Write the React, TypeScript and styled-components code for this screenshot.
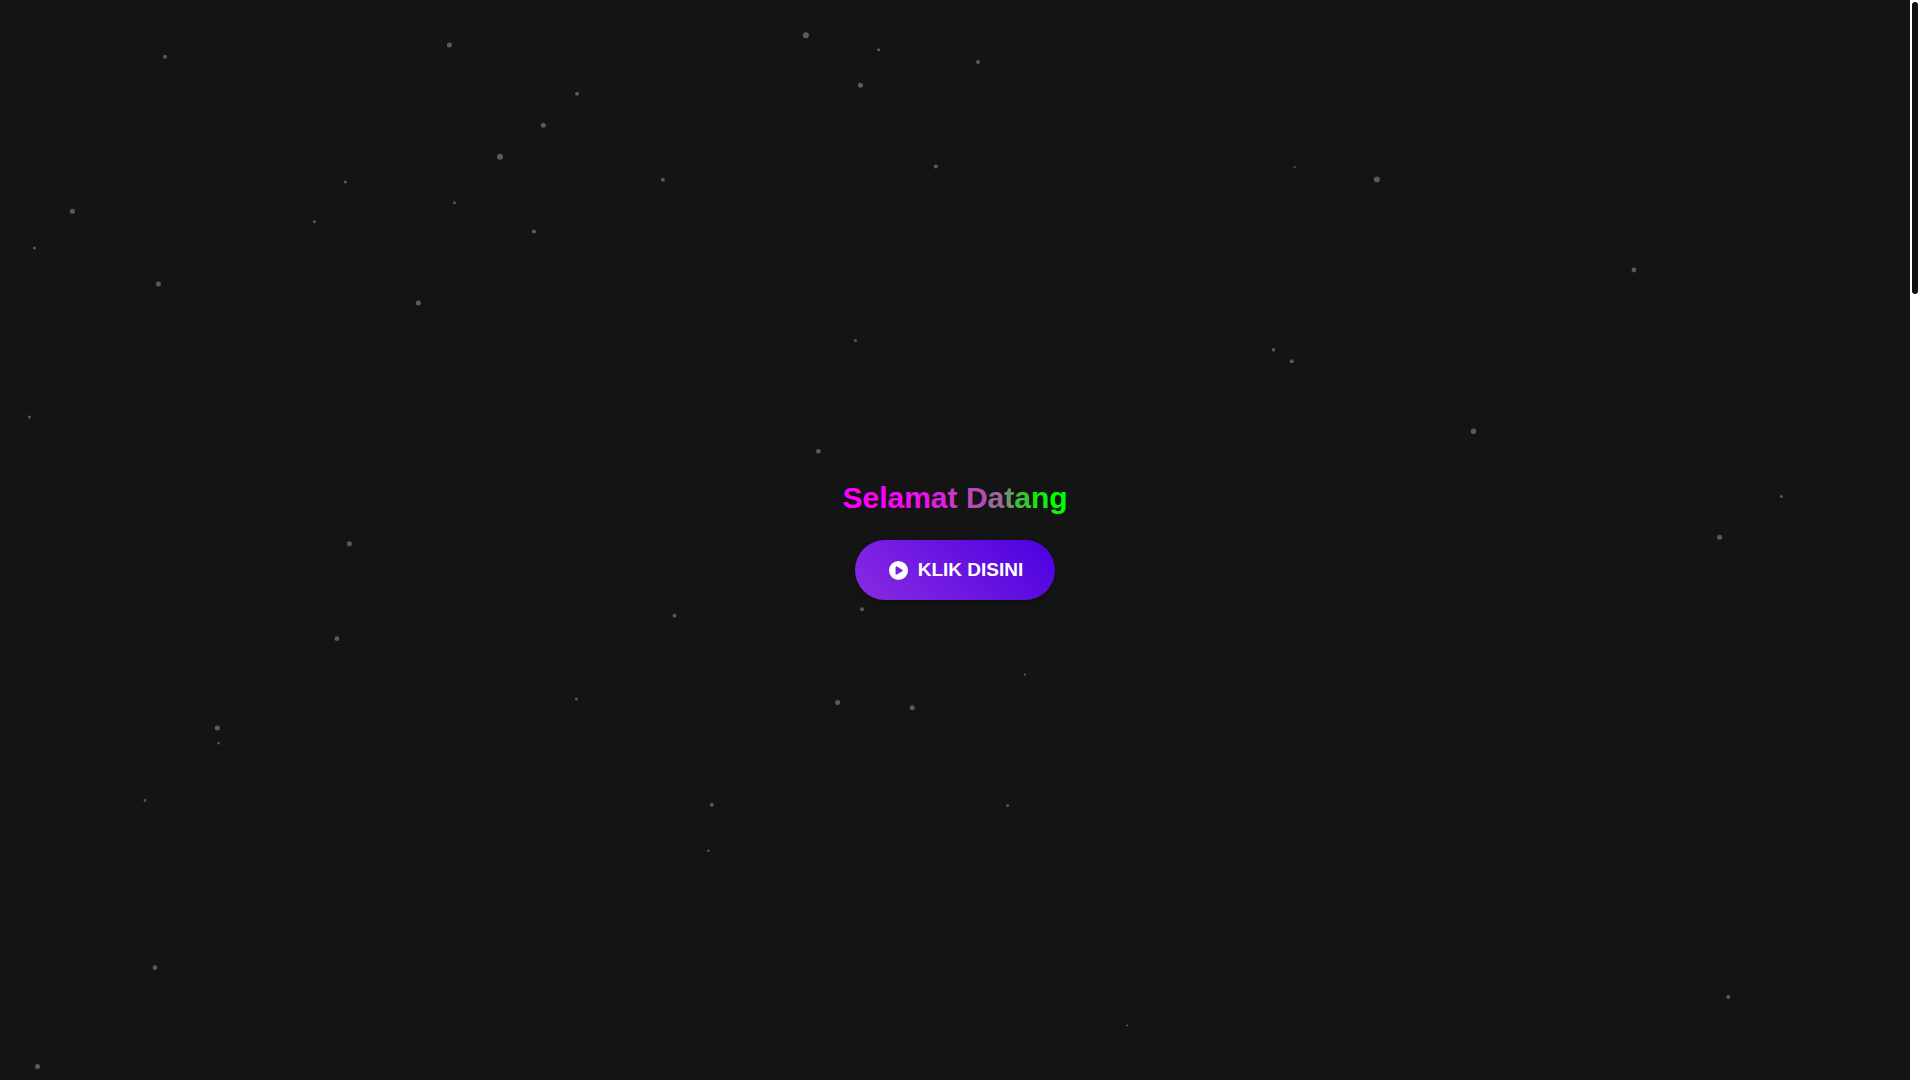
import React from "react";
import styled, { createGlobalStyle } from "styled-components";

const GlobalStyle = createGlobalStyle`
  *, *::before, *::after { box-sizing: border-box; }
  body {
    margin: 0;
    background: #141414;
    font-family: "Liberation Sans", Arial, sans-serif;
  }
`;

const Page = styled.div`
  display: flex;
  min-height: 100vh;
`;

const Hero = styled.main`
  position: relative;
  flex: 1;
  display: flex;
  flex-direction: column;
  align-items: center;
  justify-content: center;
  gap: 24px;
  overflow: hidden;
`;

const StarField = styled.svg`
  position: absolute;
  inset: 0;
  width: 100%;
  height: 100%;
  fill: #ffffff;
  fill-opacity: 0.3;
`;

const Title = styled.h1`
  position: relative;
  margin: 0;
  font-size: 30px;
  line-height: 36px;
  font-weight: 700;
`;

const Letter = styled.span<{ $color: string }>`
  color: ${({ $color }) => $color};
`;

const StartButton = styled.button`
  position: relative;
  display: inline-flex;
  align-items: center;
  gap: 10px;
  height: 60px;
  padding: 0 32px 0 34px;
  border: 0;
  border-radius: 30px;
  background: linear-gradient(45deg, #8a2be2, #4b00e0);
  box-shadow: 0 4px 6px rgba(0, 0, 0, 0.2);
  color: #ffffff;
  font-family: inherit;
  font-size: 19px;
  line-height: 24px;
  font-weight: 700;
  cursor: pointer;
`;

const PlayIcon = styled.svg`
  width: 19px;
  height: 19px;
  fill: currentColor;
`;

const ScrollTrack = styled.div`
  width: 10px;
  padding: 2px;
  background: #ffffff;
`;

const ScrollThumb = styled.div`
  height: 27vh;
  border-radius: 3px;
  background: #111111;
`;

// One colour per letter, running from magenta to green.
const titleLetters: [string, string][] = [
  ["S", "#ff00ff"], ["e", "#ff00ff"], ["l", "#ff00ff"], ["a", "#fa05fa"],
  ["m", "#f00ff0"], ["a", "#e11ee1"], ["t", "#c837c8"], [" ", "#c837c8"],
  ["D", "#b44bb4"], ["a", "#966996"], ["t", "#6e966e"], ["a", "#3cc33c"],
  ["n", "#14eb14"], ["g", "#00ff00"],
];

// Each star is [x, y, diameter].
const stars: [number, number, number][] = [
  [165, 56.8, 4], [449.4, 45.1, 5], [577, 93.7, 4], [543.3, 125.3, 5], [500, 156.7, 6],
  [345.3, 182, 3], [454.5, 202.8, 3], [72.4, 211.3, 5], [314.3, 221.8, 3], [533.9, 231.6, 4],
  [34.5, 247.9, 3], [158.4, 284.1, 5], [418.4, 303, 5], [29.4, 417, 3],
  [805.9, 35.2, 6], [878.6, 49.7, 3], [978, 62, 4], [860.4, 85.2, 5], [935.9, 166.5, 4],
  [662.9, 179.7, 4], [855.5, 340.5, 3], [1273.5, 349.8, 3.6], [818.4, 451.2, 4.6],
  [1294.7, 167.3, 2.2], [1376.9, 179.5, 6], [1633.9, 270, 4.8], [1291.8, 361.3, 4],
  [1473.5, 431.2, 5.6], [1781.4, 496.5, 3], [1719.6, 537.2, 5],
  [349.4, 543.7, 5], [336.9, 638.7, 4.8], [576.3, 698.9, 3], [217.3, 728, 5],
  [218.6, 743.3, 2.6], [144.9, 800.4, 2.6], [154.9, 967.7, 4.8], [37.5, 1066.5, 5],
  [674.5, 615.7, 3.8], [862, 609.3, 4], [1024.9, 674.7, 2.2], [837.6, 702.5, 5],
  [912.2, 707.8, 5], [711.8, 804.8, 4], [1007.6, 805.5, 3], [708.4, 850.7, 2.4],
  [1127.1, 1025.5, 2.2], [1728.3, 997, 4],
];

export default function App() {
  return (
    <Page>
      <GlobalStyle />
      <Hero>
        <StarField viewBox="0 0 1910 1080" preserveAspectRatio="xMidYMid slice" aria-hidden="true">
          {stars.map(([x, y, size]) => (
            <circle key={`${x}-${y}`} cx={x} cy={y} r={size / 2} />
          ))}
        </StarField>
        <Title>
          {titleLetters.map(([letter, color], index) => (
            <Letter key={index} $color={color}>{letter}</Letter>
          ))}
        </Title>
        <StartButton type="button">
          <PlayIcon viewBox="0 0 512 512" aria-hidden="true">
            <path d="M0 256a256 256 0 1 1 512 0A256 256 0 1 1 0 256zM188.300 147.100c-7.600 4.200-12.300 12.300-12.300 20.900V344c0 8.700 4.700 16.700 12.300 20.900s16.800 4.100 24.300-.5l144-88c7.100-4.400 11.500-12.100 11.500-20.500s-4.400-16.100-11.500-20.500l-144-88c-7.400-4.500-16.700-4.700-24.300-.5z" />
          </PlayIcon>
          KLIK DISINI
        </StartButton>
      </Hero>
      <ScrollTrack aria-hidden="true">
        <ScrollThumb />
      </ScrollTrack>
    </Page>
  );
}
